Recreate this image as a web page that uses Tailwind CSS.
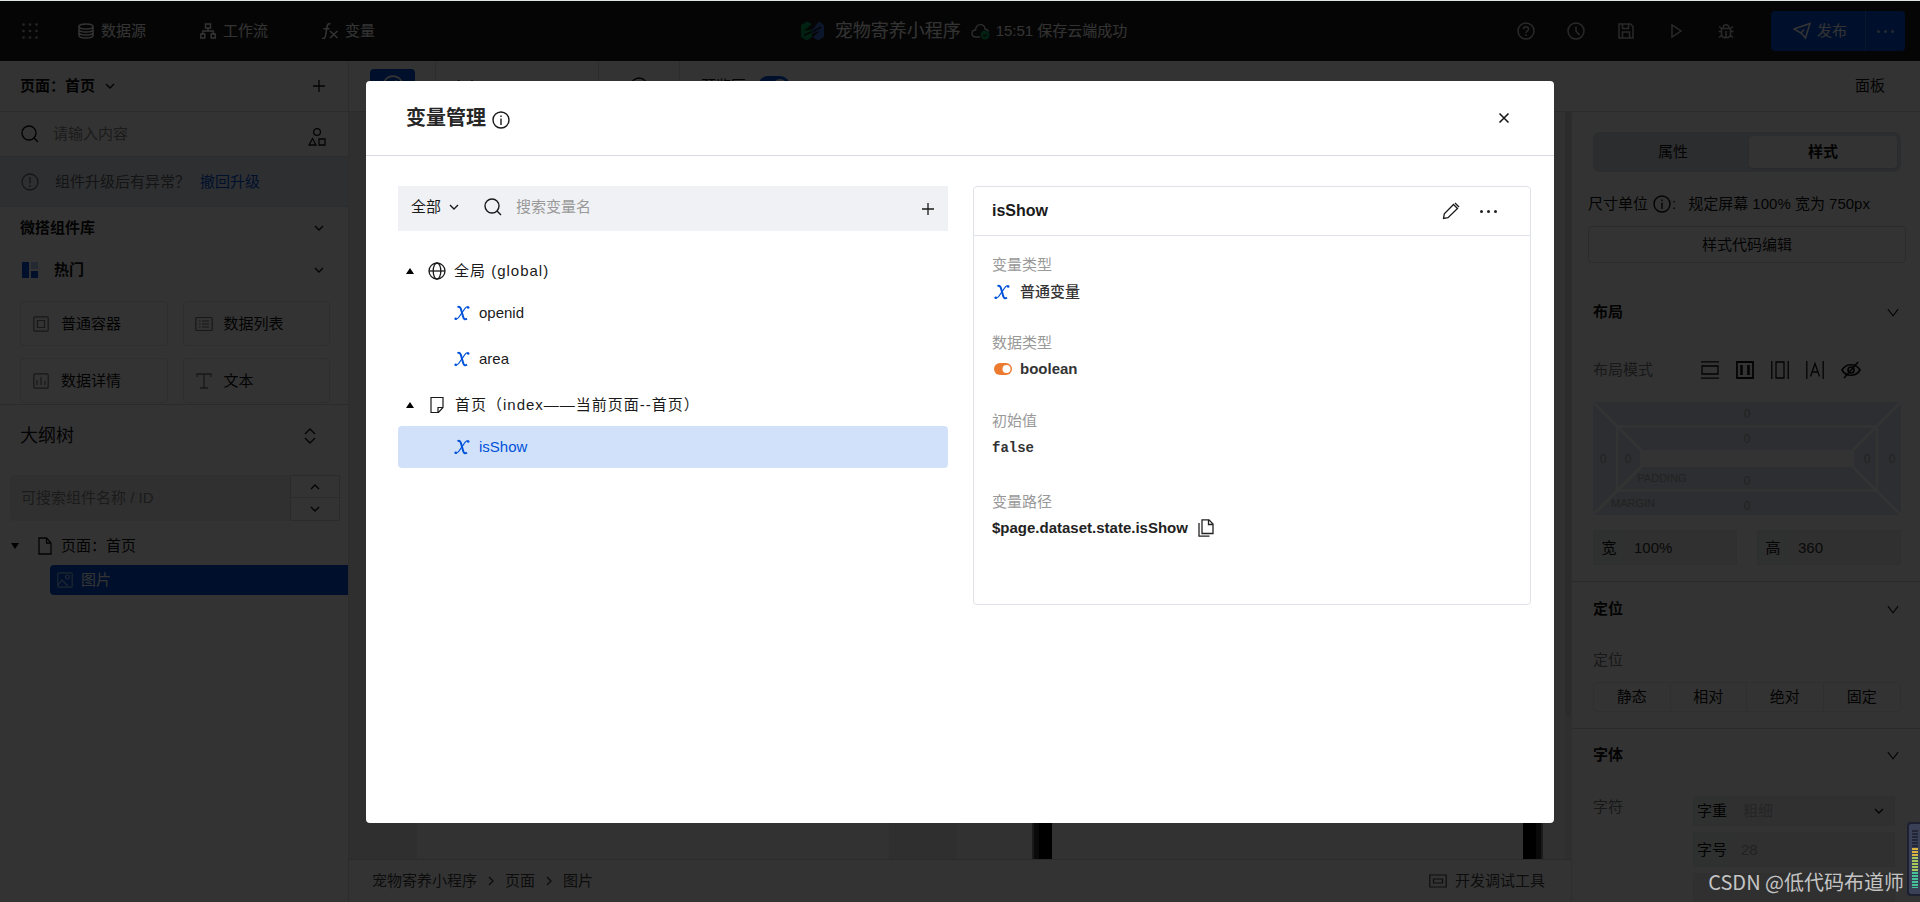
<!DOCTYPE html>
<html lang="zh-CN">
<head>
<meta charset="utf-8">
<title>变量管理</title>
<script src="https://cdn.jsdelivr.net/npm/@tailwindcss/browser@4"></script>
</head>
<body class="relative h-screen overflow-hidden bg-white font-['Liberation_Sans','Noto_Sans_CJK_SC',sans-serif] text-[15px] leading-6 text-[#111]">
<svg class="hidden">
  <symbol id="chev" viewBox="0 0 10 10"><path d="M1 3l4 4 4-4" fill="none" stroke="currentColor" stroke-width="1.4"/></symbol>
  <symbol id="chevbig" viewBox="0 0 14 10"><path d="M1 1l6 8 6-8" fill="none" stroke="currentColor" stroke-width="1.3"/></symbol>
  <symbol id="mag" viewBox="0 0 18 18"><circle cx="8" cy="8" r="7" fill="none" stroke="currentColor" stroke-width="1.4"/><path d="M13 13l4 4" stroke="currentColor" stroke-width="1.4"/></symbol>
  <symbol id="plus" viewBox="0 0 12 12"><path d="M6 0v12M0 6h12" stroke="currentColor" stroke-width="1.3"/></symbol>
  <symbol id="info" viewBox="0 0 18 18"><circle cx="9" cy="9" r="8" fill="none" stroke="currentColor" stroke-width="1.4"/><path d="M9 7.5V14M9 4.5v1.6" stroke="currentColor" stroke-width="1.4"/></symbol>
  <symbol id="varx" viewBox="0 0 16 16"><path d="M3.500 2.200C5.400 1.300 6.300 2 6.900 4L9.200 12C9.800 14.200 10.800 14.900 13 13.600" fill="none" stroke="currentColor" stroke-width="2"/><path d="M14.500 2.400C13 1.200 12 2 10.600 4L5 12C3.600 14 2.600 14.800 1.200 13.900" fill="none" stroke="currentColor" stroke-width="1.300"/><circle cx="14.200" cy="2.500" r="1.300" fill="currentColor"/><circle cx="1.700" cy="13.700" r="1.300" fill="currentColor"/></symbol>
</svg>

<div class="flex h-full flex-col pt-px">
  <!-- top bar -->
  <header class="grid h-[60px] shrink-0 grid-cols-3 items-center bg-[#1a1a1a] text-white">
    <nav class="flex items-center pl-[22px]">
      <button aria-label="菜单" class="mr-10 text-[#bbb]"><svg class="size-4" viewBox="0 0 16 16" fill="currentColor"><circle cx="1.500" cy="1.500" r="1.300"/><circle cx="8" cy="1.500" r="1.300"/><circle cx="14.500" cy="1.500" r="1.300"/><circle cx="1.500" cy="8" r="1.300"/><circle cx="8" cy="8" r="1.300"/><circle cx="14.500" cy="8" r="1.300"/><circle cx="1.500" cy="14.500" r="1.300"/><circle cx="8" cy="14.500" r="1.300"/><circle cx="14.500" cy="14.500" r="1.300"/></svg></button>
      <a href="#" class="mr-[54px] flex items-center gap-[7px]"><svg class="size-4" viewBox="0 0 16 16" fill="none" stroke="currentColor" stroke-width="1.500"><ellipse cx="8" cy="3.500" rx="7" ry="2.500"/><path d="M1 3.500v9c0 3.400 14 3.400 14 0v-9M1 6.500c0 3.400 14 3.400 14 0M1 9.500c0 3.400 14 3.400 14 0"/></svg>数据源</a>
      <a href="#" class="mr-[54px] flex items-center gap-[7px]"><svg class="size-4" viewBox="0 0 16 16" fill="none" stroke="currentColor" stroke-width="1.500"><path d="M5.500 1h5v4h-5zM.8 11h4v4h-4zM11.200 11h4v4h-4zM8 5v3M2.800 11V8h10.400v3"/></svg>工作流</a>
      <a href="#" class="flex items-center gap-[7px]"><svg class="size-4" viewBox="0 0 16 16" fill="none" stroke="currentColor" stroke-width="1.500"><path d="M8.500.8C6.500.2 5.500 1.200 5 4L3.500 13c-.4 2.200-1.300 2.800-3.300 2.200M1.500 5.800h6M8 8l7.500 7M15.500 8L8 15"/></svg>变量</a>
    </nav>
    <div class="flex items-center justify-center pl-2">
      <svg class="mr-[11px] h-5 w-[23px]" viewBox="0 0 23 20"><path d="M0 4L6 .5 11 3 4 9l-2 1 9-1.500v2L2 13l9-3v6l-5 3.500L0 16z" fill="#07a35a"/><path d="M23 4v12l-6 3.500L12 16l7-6-8 2.500V9L18 .5z" fill="#3b6fd8"/><path d="M12 10.500L20 6M3 14.500l8-4" stroke="#1a1a1a" stroke-width="1.800"/></svg>
      <span class="text-[18px]">宠物寄养小程序</span>
      <svg class="mr-1.5 ml-2.5 h-[17px] w-[19px]" viewBox="0 0 19 17"><path d="M9 14H5C-.5 14 0 7 4.500 7 5 0 13.500 0 14 6c2 .3 3 1 3.500 2.500" fill="none" stroke="#ddd" stroke-width="1.400"/><circle cx="14" cy="12" r="4.500" fill="#07a35a"/><path d="M12 12l1.500 1.500L16 11" fill="none" stroke="#1a1a1a" stroke-width="1.200"/></svg>
      <span>15:51 保存云端成功</span>
    </div>
    <div class="flex items-center justify-end pr-[15px]">
      <div class="mr-9 flex gap-8 text-[#ccc]">
        <button aria-label="帮助"><svg class="size-[18px]" viewBox="0 0 18 18" fill="none" stroke="currentColor" stroke-width="1.500"><circle cx="9" cy="9" r="8"/><path d="M6.500 7.200c0-3.300 5-3.300 5 0C11.500 9 9 9 9 11M9 12.200V14"/></svg></button>
        <button aria-label="历史"><svg class="size-[18px]" viewBox="0 0 18 18" fill="none" stroke="currentColor" stroke-width="1.500"><circle cx="9" cy="9" r="8"/><path d="M9 4.500V9l3.500 4"/></svg></button>
        <button aria-label="保存"><svg class="size-[18px]" viewBox="0 0 18 18" fill="none" stroke="currentColor" stroke-width="1.500"><path d="M2 2h11.500L16 4.500V16H2zM5.500 16v-6h7v6M5.500 2v4.500h6V2"/></svg></button>
        <button aria-label="预览"><svg class="size-[18px]" viewBox="0 0 18 18" fill="none" stroke="currentColor" stroke-width="1.500"><path d="M5 3v12l9-6z"/></svg></button>
        <button aria-label="调试"><svg class="size-[18px]" viewBox="0 0 18 18" fill="none" stroke="currentColor" stroke-width="1.500"><path d="M4.500 6.500h9v5.500c0 5-9 5-9 0zM6 6.500c0-5 6-5 6 0M9 9v6.500M1.500 9.500h3M13.500 9.500h3M2 4.500l2.500 2M16 4.500l-2.500 2M2 15.500l2.800-2.500M16 15.500L13.200 13"/></svg></button>
      </div>
      <div class="flex h-10 overflow-hidden rounded bg-[#0052d9]">
        <button class="flex w-[95px] items-center justify-center gap-1.5 border-r border-white/20 pl-1"><svg class="size-[18px]" viewBox="0 0 18 18" fill="none" stroke="currentColor" stroke-width="1.500"><path d="M1 7L17 1.500 12.500 16 8 11 1 7zM8 11l3-3.500"/></svg>发布</button>
        <button aria-label="更多" class="flex w-[39px] items-center justify-center gap-1"><i class="size-[3px] rounded-full bg-white/70"></i><i class="size-[3px] rounded-full bg-white/70"></i><i class="size-[3px] rounded-full bg-white/70"></i></button>
      </div>
    </div>
  </header>

  <div class="flex min-h-0 flex-1">
    <!-- component library and outline -->
    <aside class="flex w-[349px] shrink-0 flex-col border-r border-[#dcdcdc]">
      <div class="flex h-[51px] items-center border-b border-[#dcdcdc] px-5 font-bold">页面：首页<svg class="ml-2.5 size-[10px]"><use href="#chev"/></svg><button aria-label="新建" class="mr-[3px] ml-auto"><svg class="size-3"><use href="#plus"/></svg></button></div>
      <label class="flex h-[45px] items-center border-b border-[#dcdcdc] pr-[22px] pl-[21px]"><svg class="mr-3.5 size-[18px]"><use href="#mag"/></svg><input aria-label="搜索组件" placeholder="请输入内容" class="min-w-0 flex-1 outline-none placeholder:text-[#888]"><svg class="mt-1.5 size-[18px]" viewBox="0 0 18 18" fill="none" stroke="currentColor" stroke-width="1.300"><circle cx="9" cy="4" r="3.400"/><path d="M1 17l3.500-6.500L8 17zM11 11h6v6h-6z"/></svg></label>
      <div class="flex h-[50px] items-center border-b border-[#d5dbe6] bg-[#e4eaf5] pl-[21px] text-[#666]"><svg class="mr-4 size-[18px]" viewBox="0 0 18 18" fill="none" stroke="currentColor" stroke-width="1.300"><circle cx="9" cy="9" r="8"/><path d="M9 4v6.500M9 12v2"/></svg>组件升级后有异常？<a href="#" class="ml-2.5 text-[#0052d9]">撤回升级</a></div>
      <div class="flex h-[42px] items-center justify-between pr-6 pl-5 font-bold">微搭组件库<svg class="size-[10px]"><use href="#chev"/></svg></div>
      <div class="flex h-[42px] items-center pr-6 pl-[22px] font-bold"><svg class="mr-4 size-4" viewBox="0 0 16 16"><path d="M0 0h7v16H0z" fill="#0052d9"/><path d="M9 0h7v7H9z" fill="#b4c8ee"/><path d="M9 9h7v7H9z" fill="#0052d9"/></svg>热门<svg class="ml-auto size-[10px]"><use href="#chev"/></svg></div>
      <div class="grid grid-cols-2 gap-x-[15px] gap-y-3 border-b border-[#d4d4d4] pt-[10px] pr-[18px] pb-px pl-5">
        <button class="flex h-[45px] items-center gap-3 rounded border border-[#e3e3e3] pl-3"><svg class="size-4 text-[#777]" viewBox="0 0 16 16" fill="none" stroke="currentColor" stroke-width="1.200"><rect x=".8" y=".8" width="14.400" height="14.400" rx="1"/><path d="M4.500 4.500h7v7h-7z"/></svg>普通容器</button>
        <button class="flex h-[45px] items-center gap-[11px] rounded border border-[#e3e3e3] pl-[11px]"><svg class="h-4 w-[18px] text-[#777]" viewBox="0 0 18 16" fill="none" stroke="currentColor" stroke-width="1.200"><rect x=".8" y="1.500" width="16.400" height="13" rx="1"/><path d="M4 5h1.500M4 8h1.500M4 11h1.500M7 5h7M7 8h7M7 11h7"/></svg>数据列表</button>
        <button class="flex h-[45px] items-center gap-3 rounded border border-[#e3e3e3] pl-3"><svg class="size-4 text-[#777]" viewBox="0 0 16 16" fill="none" stroke="currentColor" stroke-width="1.200"><rect x=".8" y=".8" width="14.400" height="14.400" rx="1"/><path d="M4 7v5M8 4v8M12 8v4"/></svg>数据详情</button>
        <button class="flex h-[45px] items-center gap-3 rounded border border-[#e3e3e3] pl-3"><svg class="size-4 text-[#777]" viewBox="0 0 16 16" fill="none" stroke="currentColor" stroke-width="1.300"><path d="M1 4V1h14v3M8 1v14M4 15h8"/></svg>文本</button>
      </div>
      <div class="flex h-[61px] items-center justify-between pr-8 pl-5 text-[18px]">大纲树<svg class="h-4 w-3" viewBox="0 0 12 16" fill="none" stroke="currentColor" stroke-width="1.400"><path d="M1 6l5-5 5 5M1 10l5 5 5-5"/></svg></div>
      <div class="mt-[9px] mr-2 ml-2.5 flex h-[46px]">
        <input aria-label="搜索大纲" placeholder="可搜索组件名称 / ID" class="min-w-0 flex-1 rounded-l bg-[#f0f0f0] px-[11px] outline-none placeholder:text-[#888]">
        <div class="grid w-[50px] grid-rows-2 divide-y divide-[#d4d4d4] border border-[#d4d4d4]"><button aria-label="上一个" class="flex items-center justify-center"><svg class="size-[10px] rotate-180"><use href="#chev"/></svg></button><button aria-label="下一个" class="flex items-center justify-center"><svg class="size-[10px]"><use href="#chev"/></svg></button></div>
      </div>
      <div class="mt-[10px] flex h-[30px] items-center pl-[11px]"><svg class="mr-[19px] h-1.5 w-2" viewBox="0 0 8 6"><path d="M0 0h8L4 6z"/></svg><svg class="mr-[9px] h-[18px] w-3.5" viewBox="0 0 14 18" fill="none" stroke="currentColor" stroke-width="1.300"><path d="M1 1h7.500L13 6v11H1zM8.500 1v5H13"/></svg>页面：首页</div>
      <div class="mt-1 ml-[50px] flex h-[30px] items-center rounded-l bg-[#0052d9] pl-[7px] text-white"><svg class="mr-2 size-4 text-white/60" viewBox="0 0 16 16" fill="none" stroke="currentColor" stroke-width="1.200"><rect x=".8" y=".8" width="14.400" height="14.400" rx="1"/><circle cx="10.500" cy="5" r="2"/><path d="M1 13l4-5 6 6"/></svg>图片</div>
    </aside>

    <div class="flex min-w-0 flex-1 flex-col">
      <!-- canvas toolbar -->
      <div class="flex h-[51px] shrink-0 items-center border-b border-[#dcdcdc]">
        <div class="flex h-full w-[87px] items-center border-r border-[#dcdcdc] pl-[21px]"><button aria-label="编辑模式" class="flex h-[34px] w-[45px] items-center justify-center rounded bg-[#0052d9] text-white"><svg class="size-[22px]" viewBox="0 0 20 20" fill="none" stroke="currentColor" stroke-width="1.500"><circle cx="10" cy="10" r="9"/><path d="M8 11l5-6"/></svg></button></div>
        <div class="flex h-full w-[163px] items-center border-r border-[#dcdcdc] pl-[21px]">iPhone 8 100%</div>
        <div class="flex h-full w-[81px] items-center justify-center border-r border-[#dcdcdc]"><svg class="size-[18px]"><use href="#info"/></svg></div>
        <div class="flex items-center gap-3 pl-[21px]">预览区<span class="flex h-5 w-8 items-center justify-end rounded-full bg-[#0052d9] p-[3px]"><i class="size-3.5 rounded-full bg-white"></i></span></div>
        <a href="#" class="mr-[35px] ml-auto">面板</a>
      </div>
      <div class="flex min-h-0 flex-1">
        <!-- canvas -->
        <main class="flex min-w-0 flex-1 flex-col">
          <div class="flex min-h-0 flex-1 bg-[#ebebeb]">
            <div class="ml-[68px] w-[472px] bg-[#fafafa]"></div>
            <div class="ml-[68px] w-[75px] bg-[#f3f3f3]"></div>
            <div class="flex flex-1 border-x-2 border-[#888] bg-[#333] px-[5px]"><div class="flex-1 border-x-[13px] border-black bg-[#fafafa]"></div></div>
            <div class="w-[22px] bg-[#f3f3f3]"></div>
            <div class="w-1.5"><div class="h-[605px] rounded-full bg-[#d8d8d8]"></div></div>
          </div>
          <footer class="flex h-[43px] items-center border-t border-[#d4d4d4] pr-[26px] pl-[23px] text-[#444]">
            宠物寄养小程序<svg class="mx-[9px] size-[10px] -rotate-90"><use href="#chev"/></svg>页面<svg class="mx-[9px] size-[10px] -rotate-90"><use href="#chev"/></svg>图片
            <a href="#" class="ml-auto flex items-center gap-2"><svg class="h-3.5 w-[18px]" viewBox="0 0 18 14" fill="none" stroke="currentColor" stroke-width="1.200"><path d="M.8 1h16.400v12H.8zM4.500 5h9v4h-9z"/></svg>开发调试工具</a>
          </footer>
        </main>

        <!-- style panel -->
        <aside class="w-[349px] shrink-0 overflow-hidden border-l border-[#e6e6e6]">
          <div class="mt-5 mr-[19px] ml-[21px] grid h-10 grid-cols-[1fr_148px] rounded-md bg-[#dde1e8] p-1"><button>属性</button><button class="rounded bg-white font-bold shadow">样式</button></div>
          <div class="mt-5 ml-4 flex items-center">尺寸单位<svg class="ml-[5px] size-[18px]"><use href="#info"/></svg><span class="mr-3 ml-px">:</span>规定屏幕 100% 宽为 750px</div>
          <button class="mt-2.5 ml-4 flex h-[37px] w-[318px] items-center justify-center rounded-sm border border-[#d4d4d4]">样式代码编辑</button>
          <div class="mr-[19px] ml-[21px]">
            <h3 class="mt-[37px] flex items-center justify-between pr-0.5 font-bold">布局<svg class="h-[9px] w-3"><use href="#chevbig"/></svg></h3>
            <div class="mt-[34px] flex items-center"><span class="w-[108px] text-[#777]">布局模式</span>
              <div class="flex gap-[17px]">
                <button aria-label="块级"><svg class="size-[18px]" viewBox="0 0 18 18" fill="none" stroke="currentColor" stroke-width="1.300"><path d="M0 .8h18M0 17.200h18M1 5h16v8H1z"/></svg></button>
                <button aria-label="弹性"><svg class="size-[18px]" viewBox="0 0 18 18" fill="none" stroke="currentColor" stroke-width="1.800"><path d="M1 1h16v16H1z"/><path d="M5.500 4v10M12.500 4v10" stroke-width="2.600"/></svg></button>
                <button aria-label="行内块"><svg class="size-[18px]" viewBox="0 0 18 18" fill="none" stroke="currentColor" stroke-width="1.300"><path d="M.8 0v18M17.200 0v18M5 1h8v16H5z"/></svg></button>
                <button aria-label="行内"><svg class="size-[18px]" viewBox="0 0 18 18" fill="none" stroke="currentColor" stroke-width="1.300"><path d="M.8 0v18M17.200 0v18M4.500 15.500L9 2.500l4.500 13M6 11h6"/></svg></button>
                <button aria-label="隐藏"><svg class="h-[18px] w-5" viewBox="0 0 20 18" fill="none" stroke="currentColor" stroke-width="1.700"><path d="M1 9c4-7 14-7 18 0-4 7-14 7-18 0z"/><circle cx="10" cy="9" r="3"/><path d="M17 1L3 17"/></svg></button>
              </div>
            </div>
            <svg class="mt-5 block w-full" viewBox="0 0 308 113" font-family="Liberation Sans" font-size="12" fill="#aaa" text-anchor="middle">
              <path d="M0 0h308v113H0z" fill="#d9e7f2"/>
              <path d="M0 0l48 48M308 0l-48 48M0 113l48-48M308 113l-48-48M24 24.500h260v64H24z" fill="none" stroke="#fff" stroke-width="2.500"/>
              <path d="M47 48h214v17H47z" fill="#fff"/>
              <text x="154" y="16">0</text><text x="154" y="41">0</text><text x="154" y="83">0</text><text x="154" y="108">0</text>
              <text x="10" y="61">0</text><text x="35" y="61">0</text><text x="274" y="61">0</text><text x="299" y="61">0</text>
              <text x="69" y="80" font-size="11">PADDING</text><text x="40" y="105" font-size="11">MARGIN</text>
            </svg>
            <div class="mt-[15px] grid grid-cols-2 gap-5">
              <label class="flex h-[35px] items-center border border-[#e4e8e8] bg-[#eee]"><span class="flex h-full w-[30px] items-center justify-center bg-[#e9efee]">宽</span><input value="100%" class="w-0 min-w-0 flex-1 pl-[10px] text-[#333] outline-none"></label>
              <label class="flex h-[35px] items-center border border-[#e4e8e8] bg-[#eee]"><span class="flex h-full w-[30px] items-center justify-center bg-[#e9efee]">高</span><input value="360" class="w-0 min-w-0 flex-1 pl-[10px] text-[#333] outline-none"></label>
            </div>
          </div>
          <section class="mt-4 border-t border-[#d0d0d0] pr-[19px] pl-[21px]">
            <h3 class="mt-[15px] flex items-center justify-between pr-0.5 font-bold">定位<svg class="h-[9px] w-3"><use href="#chevbig"/></svg></h3>
            <p class="mt-[27px] text-[#777]">定位</p>
            <div class="mt-[10px] grid h-[30px] grid-cols-4 divide-x divide-[#e4e8e8] rounded border border-[#e4e8e8]"><button>静态</button><button>相对</button><button>绝对</button><button>固定</button></div>
          </section>
          <section class="mt-4 border-t border-[#d0d0d0] pr-[19px] pl-[21px]">
            <h3 class="mt-[14px] flex items-center justify-between pr-0.5 font-bold">字体<svg class="h-[9px] w-3"><use href="#chevbig"/></svg></h3>
            <div class="mt-7 flex"><span class="w-[100px] shrink-0 text-[#777]">字符</span>
              <div class="mr-1.5 flex min-w-0 flex-1 flex-col gap-1.5 pt-px">
                <label class="flex h-[30px] items-center border border-[#e4e8e8] bg-[#eee] pr-2.5"><span class="flex h-full w-9 shrink-0 items-center justify-center bg-[#e9efee]">字重</span><select class="min-w-0 flex-1 appearance-none pl-[13px] text-[#bbb] outline-none"><option>粗细</option></select><svg class="size-[10px]"><use href="#chev"/></svg></label>
                <label class="flex h-[35px] items-center border border-[#e4e8e8] bg-[#eee]"><span class="flex h-full w-9 shrink-0 items-center justify-center bg-[#e9efee]">字号</span><input placeholder="28" class="min-w-0 flex-1 pl-[11px] outline-none placeholder:text-[#aaa]"></label>
                <div class="h-[30px] border border-[#e4e8e8] bg-[#eee]"></div>
              </div>
            </div>
          </section>
        </aside>
      </div>
    </div>
  </div>
</div>

<!-- dimmed backdrop and dialog -->
<div class="absolute inset-0 border-t border-[#dfe5e3] bg-black/80 bg-clip-padding pt-20 pb-[79px]">
  <div role="dialog" aria-labelledby="dlg" class="mx-auto flex h-full w-full max-w-[1188px] flex-col rounded bg-white text-[#1a1a1a]">
    <div class="flex h-[75px] shrink-0 items-center border-b border-[#d7d9e5] pr-11 pl-10"><h2 id="dlg" class="text-xl font-bold text-[#262626]">变量管理</h2><svg class="mt-1 ml-1.5 size-[18px]"><use href="#info"/></svg>
      <button aria-label="关闭" class="ml-auto"><svg class="size-3" viewBox="0 0 12 12"><path d="M1.500 1.500l9 9M10.500 1.500l-9 9" stroke="currentColor" stroke-width="1.600"/></svg></button></div>
    <div class="grid grid-cols-[550px_1fr] items-start gap-[25px] pt-[30px] pr-[23px] pl-8">
      <div>
        <div class="flex h-[45px] items-center bg-[#f0f1f5] pr-3.5 pl-[13px] pb-1">
          <button class="mr-[25px] flex items-center gap-2">全部<svg class="size-[10px]"><use href="#chev"/></svg></button>
          <svg class="mr-3.5 size-[18px]"><use href="#mag"/></svg>
          <input aria-label="搜索变量名" placeholder="搜索变量名" class="min-w-0 flex-1 outline-none placeholder:text-[#999]">
          <button aria-label="添加" class="mt-1"><svg class="size-3"><use href="#plus"/></svg></button>
        </div>
        <ul class="mt-[19px]">
          <li>
            <div class="flex h-[42px] items-center pl-2"><svg class="mr-3.5 h-1.5 w-2" viewBox="0 0 8 6"><path d="M0 6h8L4 0z"/></svg><svg class="mr-2 size-[18px]" viewBox="0 0 18 18" fill="none" stroke="currentColor" stroke-width="1.300"><circle cx="9" cy="9" r="8"/><ellipse cx="9" cy="9" rx="3.800" ry="8"/><path d="M1 9h16"/></svg><span class="tracking-[1px]">全局 (global)</span></div>
            <ul>
              <li class="mb-1 flex h-[42px] items-center pl-14"><svg class="mr-[9px] size-4 text-[#0052d9]"><use href="#varx"/></svg>openid</li>
              <li class="mb-1 flex h-[42px] items-center pl-14"><svg class="mr-[9px] size-4 text-[#0052d9]"><use href="#varx"/></svg>area</li>
            </ul>
          </li>
          <li>
            <div class="flex h-[42px] items-center pl-2"><svg class="mr-3.5 h-1.5 w-2" viewBox="0 0 8 6"><path d="M0 6h8L4 0z"/></svg><svg class="mr-[9px] size-[18px]" viewBox="0 0 18 18" fill="none" stroke="currentColor" stroke-width="1.200"><path d="M3 1.500h12v10L10.500 16.500H3zM10 16.500V11.500h5"/></svg><span class="tracking-[1px]">首页（index——当前页面--首页）</span></div>
            <ul><li class="flex h-[42px] items-center rounded bg-[#d2e1fa] pl-14 text-[#0052d9]"><svg class="mr-[9px] size-4"><use href="#varx"/></svg>isShow</li></ul>
          </li>
        </ul>
      </div>
      <section class="rounded border border-[#dfe2e9] pb-[63px]">
        <div class="flex h-[49px] items-center border-b border-[#dfe2e9] pr-[33px] pl-[18px]"><h3 class="text-base font-bold">isShow</h3>
          <button aria-label="编辑" class="mr-5 ml-auto"><svg class="size-[18px]" viewBox="0 0 18 18" fill="none" stroke="currentColor" stroke-width="1.300"><path d="M1.500 16.500l.8-4.700L11.500 2.500l4 4L6 15.700zM13 1l4 4"/></svg></button>
          <button aria-label="更多" class="flex gap-1"><i class="size-[3px] rounded-full bg-[#222]"></i><i class="size-[3px] rounded-full bg-[#222]"></i><i class="size-[3px] rounded-full bg-[#222]"></i></button></div>
        <dl class="flex flex-col gap-[27px] pt-[17px] pl-[18px]">
          <div><dt class="text-[#999]">变量类型</dt><dd class="mt-[3px] flex items-center font-medium text-[#333]"><svg class="mr-2.5 ml-0.5 size-4 text-[#0052d9]"><use href="#varx"/></svg>普通变量</dd></div>
          <div><dt class="text-[#999]">数据类型</dt><dd class="mt-0.5 mb-px flex items-center font-bold text-[#333]"><svg class="mr-2 ml-0.5 h-3 w-[18px]" viewBox="0 0 18 12"><rect width="18" height="12" rx="6" fill="#ed7b2f"/><circle cx="12.500" cy="6" r="4" fill="#fff"/></svg>boolean</dd></div>
          <div><dt class="text-[#999]">初始值</dt><dd class="mt-[3px] font-['Liberation_Mono',monospace] text-sm leading-6 font-bold text-[#333]">false</dd></div>
          <div class="pt-[3px]"><dt class="text-[#999]">变量路径</dt><dd class="mt-0.5 mb-px flex items-center gap-2.5 font-bold text-[#222]">$page.dataset.state.isShow<button aria-label="复制"><svg class="h-[18px] w-4" viewBox="0 0 16 18" fill="none" stroke="currentColor" stroke-width="1.300"><path d="M4 .8h7L15 5v9.500H4zM10.500.8V5.500H15M1 4v13.200h10.500"/></svg></button></dd></div>
        </dl>
      </section>
    </div>
  </div>
</div>

<!-- watermark and level meter above everything -->
<div class="absolute right-4 bottom-[5px] font-['Noto_Sans_CJK_SC',sans-serif] text-xl leading-[30px] text-[#c4c4c4]">CSDN @低代码布道师</div>
<div class="absolute right-0 bottom-1.5 h-[74px] w-[13px] rounded-l border-2 border-r-0 border-[#1c2030] bg-[#3a4156] py-1.5 pl-[3px]">
  <svg class="h-[58px] w-1.5" viewBox="0 0 6 58"><path d="M3 0v18" stroke="#222636" stroke-width="6" stroke-dasharray="2 1"/><path d="M3 18v10" stroke="#d9b441" stroke-width="6" stroke-dasharray="2 1"/><path d="M3 27v16" stroke="#a5c95c" stroke-width="6" stroke-dasharray="2 1"/><path d="M3 42v16" stroke="#46c29a" stroke-width="6" stroke-dasharray="2 1"/></svg>
</div>
</body>
</html>
